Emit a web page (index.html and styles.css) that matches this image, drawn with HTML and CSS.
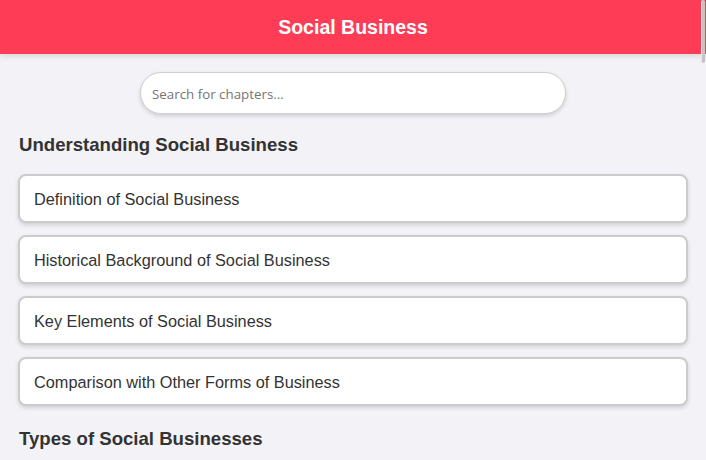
FILE: index.html
```html
<!DOCTYPE html>
<html lang="en">
<head>
<meta charset="utf-8">
<title>Social Business</title>
<link rel="stylesheet" href="styles.css">
</head>
<body>
<header class="topbar">
  <h1 class="title">Social Business</h1>
</header>
<main class="content">
  <div class="search-wrap">
    <input class="search" type="text" placeholder="Search for chapters...">
  </div>
  <section class="section">
    <h2 class="section-title">Understanding Social Business</h2>
    <ul class="chapters">
      <li class="chapter">Definition of Social Business</li>
      <li class="chapter">Historical Background of Social Business</li>
      <li class="chapter">Key Elements of Social Business</li>
      <li class="chapter">Comparison with Other Forms of Business</li>
    </ul>
  </section>
  <section class="section">
    <h2 class="section-title">Types of Social Businesses</h2>
    <ul class="chapters">
      <li class="chapter">Type I Social Businesses</li>
      <li class="chapter">Type II Social Businesses</li>
      <li class="chapter">Hybrid Models</li>
      <li class="chapter">Cooperatives and Community Enterprises</li>
    </ul>
  </section>
  <section class="section">
    <h2 class="section-title">Building a Social Business</h2>
    <ul class="chapters">
      <li class="chapter">Identifying a Social Problem</li>
      <li class="chapter">Designing the Business Model</li>
      <li class="chapter">Funding and Investment</li>
      <li class="chapter">Measuring Social Impact</li>
    </ul>
  </section>
</main>
<div class="scroll-thumb"></div>
</body>
</html>
```
FILE: styles.css
```css
html::-webkit-scrollbar { width: 0; height: 0; }
html { scrollbar-width: none; }

body {
  margin: 0;
  background: #f2f2f7;
  font-family: "Liberation Sans", Arial, sans-serif;
  color: #333;
}

.topbar {
  height: 54px;
  background: #ff3c56;
  display: flex;
  align-items: center;
  justify-content: center;
  box-shadow: 0 2px 6px rgba(0, 0, 0, 0.12);
}

.title {
  margin: 0;
  color: #fff;
  font-size: 19.5px;
  font-weight: bold;
}

.content {
  padding: 18px 18px 30px;
}

.search-wrap {
  display: flex;
  justify-content: center;
}

.search {
  width: 426px;
  height: 42px;
  box-sizing: border-box;
  border: 1px solid #d0d0d0;
  border-radius: 21px;
  padding: 2px 11px 0;
  font-family: "Open Sans", "Noto Sans", sans-serif;
  font-size: 13.33px;
  color: #333;
  background: #fff;
  box-shadow: 0 2px 4px rgba(0, 0, 0, 0.15);
  outline: none;
}

.search::placeholder {
  color: #757575;
}

.section {
  margin-top: 20px;
}

.section + .section {
  margin-top: 22px;
}

.section-title {
  margin: 0 0 19px 1px;
  font-size: 18.6px;
  font-weight: bold;
  color: #333;
  line-height: 21px;
}

.chapters {
  list-style: none;
  margin: 0;
  padding: 0;
  display: flex;
  flex-direction: column;
  gap: 12px;
}

.chapter {
  background: #fff;
  border: 2px solid #cccccc;
  border-radius: 8px;
  padding: 14px 14px 12px;
  font-size: 16.3px;
  line-height: 19px;
  color: #333;
  box-shadow: 0 2px 4px rgba(0, 0, 0, 0.14);
}

.scroll-thumb {
  position: fixed;
  top: 0;
  right: 1px;
  width: 3px;
  height: 63px;
  background: #c4c4c4;
  border-left: 1px solid #e6e6e6;
  border-radius: 2px;
}
```
